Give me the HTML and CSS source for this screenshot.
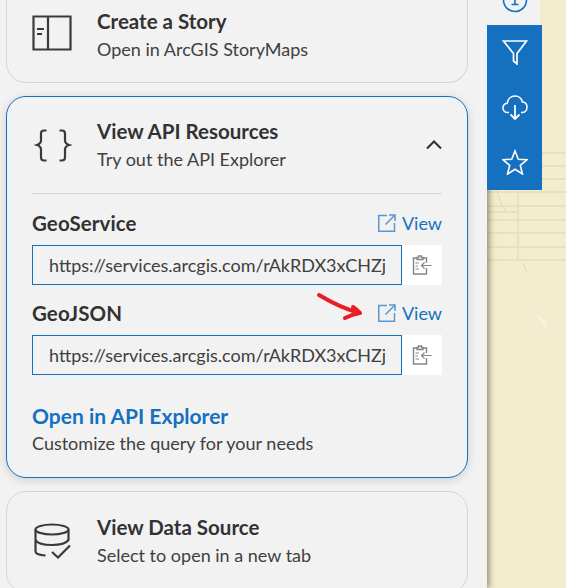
FILE: index.html
```html
<!doctype html>
<html>
  <head>
    <meta charset="utf-8">
    <title>View API Resources</title>
    <link rel="stylesheet" href="styles.css">
  </head>
  <body>
    <div class="page">
      <svg class="mapLines" viewBox="0 0 79 588">
        <path d="M0 153h79M0 166h79M0 179h79M0 192h79M0 206h79M0 212h30M0 220h79M0 233h79M0 247h79M0 260h79M31 192v68M10 190c2 8 4 16 10 22M36 263c1 3 2 6 4 8" fill="none" stroke="#e3deb9" stroke-width="1.500"/>
        <path d="M51 316l3 3 3 2 0 4 2 2" fill="none" stroke="#f8f4de" stroke-width="3"/>
      </svg>

      <div class="panel">
        <div class="card cardTop">
          <svg class="cardIcon storyIcon" viewBox="0 0 40 36"><path d="M1.500 1.500h37v33h-37zM16 1.500v33" fill="none" stroke="#3a3a3a" stroke-width="2.200"/><path d="M5 14h7M5 19h5" fill="none" stroke="#3a3a3a" stroke-width="2"/></svg>
          <div class="cardText">
            <div class="cardTitle">Create a Story</div>
            <div class="cardSub">Open in ArcGIS StoryMaps</div>
          </div>
        </div>

        <div class="card cardOpen">
          <div class="cardHead">
            <svg class="cardIcon" viewBox="0 0 40 36"><path d="M14.500 3.500H12c-2 0-3 1-3 3v7c0 2-1 3.500-4 4.500 3 1 4 2.500 4 4.500v8c0 2 1 3 3 3h2.500M27.500 3.500H30c2 0 3 1 3 3v7c0 2 1 3.500 4 4.500-3 1-4 2.500-4 4.500v8c0 2-1 3-3 3h-2.500" fill="none" stroke="#3a3a3a" stroke-width="2.200"/></svg>
            <div class="cardText">
              <div class="cardTitle">View API Resources</div>
              <div class="cardSub">Try out the API Explorer</div>
            </div>
            <svg class="chevron" viewBox="0 0 16 10"><path d="M1 8.500l7-7 7 7" fill="none" stroke="#2f2f2f" stroke-width="2"/></svg>
          </div>

          <div class="cardBody">
            <div class="linkRow">
              <span class="linkName">GeoService</span>
              <a class="viewLink"><svg class="viewIcon" viewBox="0 0 18 18"><path d="M9 1.500H.75v15.750h15.750V9" fill="none" stroke="#5b97d3" stroke-width="1.500"/><path d="M7.500 10.500L16.500 1.500M11 1h6v6" fill="none" stroke="#5b97d3" stroke-width="1.500"/></svg>View</a>
            </div>
            <div class="urlRow">
              <div class="urlBox"><span class="urlText">https://services.arcgis.com/rAkRDX3xCHZj</span></div>
              <div class="copyBtn">
                <svg viewBox="0 0 20 20"><path d="M5 3H1.500v16h13v-6M14.500 8V3H11M5 4.500V2.500h1.500V1h3v1.500H11V4.500z" fill="none" stroke="#858585" stroke-width="1.400"/><path d="M3.500 8h3.500M3.500 11h2.500M3.500 14h3.500M19.500 10.500H9M12.500 7.500l-3 3 3 3" fill="none" stroke="#858585" stroke-width="1.200"/></svg>
              </div>
            </div>

            <div class="linkRow">
              <span class="linkName">GeoJSON</span>
              <a class="viewLink"><svg class="viewIcon" viewBox="0 0 18 18"><path d="M9 1.500H.75v15.750h15.750V9" fill="none" stroke="#5b97d3" stroke-width="1.500"/><path d="M7.500 10.500L16.500 1.500M11 1h6v6" fill="none" stroke="#5b97d3" stroke-width="1.500"/></svg>View</a>
              <svg class="redArrow" viewBox="0 0 48 30"><path d="M3 3c10 6 24 14 41 18M44 21c-6 1-11 3-15 5M44 21c-2-2-4-4-7-6" fill="none" stroke="#e81e25" stroke-width="4" stroke-linecap="round"/></svg>
            </div>
            <div class="urlRow">
              <div class="urlBox"><span class="urlText">https://services.arcgis.com/rAkRDX3xCHZj</span></div>
              <div class="copyBtn">
                <svg viewBox="0 0 20 20"><path d="M5 3H1.500v16h13v-6M14.500 8V3H11M5 4.500V2.500h1.500V1h3v1.500H11V4.500z" fill="none" stroke="#858585" stroke-width="1.400"/><path d="M3.500 8h3.500M3.500 11h2.500M3.500 14h3.500M19.500 10.500H9M12.500 7.500l-3 3 3 3" fill="none" stroke="#858585" stroke-width="1.200"/></svg>
              </div>
            </div>

            <div class="explorer">
              <a class="explorerLink">Open in API Explorer</a>
              <div class="cardSub">Customize the query for your needs</div>
            </div>
          </div>
        </div>

        <div class="card cardLast">
          <svg class="cardIcon" viewBox="0 0 40 36"><ellipse cx="20" cy="6.500" rx="16.500" ry="5" fill="none" stroke="#3a3a3a" stroke-width="2.200"/><path d="M3.500 6.500v22c0 2 3 3.500 10 4M36.500 6.500v11M3.500 17c2 3.500 9 5 16.500 5s14-1.500 16.500-5" fill="none" stroke="#3a3a3a" stroke-width="2.200"/><path d="M20 29l6 5.500 12-12" fill="none" stroke="#3a3a3a" stroke-width="2.200"/></svg>
          <div class="cardText">
            <div class="cardTitle">View Data Source</div>
            <div class="cardSub">Select to open in a new tab</div>
          </div>
        </div>
      </div>

      <div class="rail">
        <div class="railTab">
          <svg viewBox="0 0 26 26"><circle cx="13" cy="3" r="11.500" fill="none" stroke="#1670c0" stroke-width="1.600"/><path d="M13 -2v9M9.500 7.500h7" fill="none" stroke="#1670c0" stroke-width="1.600"/></svg>
        </div>
        <div class="railIcons">
          <svg viewBox="0 0 26 26"><path d="M1.500 2h23L15 14.500V25l-3.500-3V14.500z" fill="none" stroke="#fff" stroke-width="1.700"/></svg>
          <svg viewBox="0 0 26 26"><path d="M7 18.500H5.500C3 18.500 1 16.500 1 13.800c0-2.500 1.800-4.300 4.200-4.600C5.800 5 8.800 2 13 2c3.800 0 6.500 2.500 7.500 6 2.800.2 4.500 2.500 4.500 5.200 0 2.800-2 5.300-5 5.300h-1" fill="none" stroke="#fff" stroke-width="1.600"/><path d="M13 11v13.500M8.500 20.500l4.500 4.500 4.500-4.500" fill="none" stroke="#fff" stroke-width="1.800"/></svg>
          <svg viewBox="0 0 26 26"><path d="M13 2l3.300 8.200 8.700.6-6.700 5.600 2.200 8.600-7.500-4.700-7.500 4.700 2.200-8.600L1 10.800l8.700-.6z" fill="none" stroke="#fff" stroke-width="1.600"/></svg>
        </div>
      </div>
    </div>
  </body>
</html>
```

FILE: styles.css
```css
html, body {
  margin:0;
  height:100%;
  overflow:hidden;
}

body {
  font-family:Lato, "Noto Sans", sans-serif;
  color:#323232;
}

.page {
  display:flex;
  align-items:flex-start;
  position:relative;
  width:566px;
  height:588px;
  overflow:hidden;
  background-color:#f2edcf;
}

.panel {
  flex:none;
  width:487px;
  height:588px;
  box-sizing:border-box;
  padding:0 19px 0 6px;
  background-color:#f2f2f2;
  box-shadow:2px 0 6px rgba(60,50,20,.55);
  position:relative;
  z-index:2;
}

.card {
  display:flex;
  align-items:center;
  box-sizing:border-box;
  width:462px;
  height:102px;
  margin-bottom:13px;
  padding:0 25px;
  border:1px solid #d6d6d6;
  border-radius:20px;
  background-color:#f2f2f2;
}

.cardTop {
  height:83px;
  border-top:none;
  border-top-left-radius:0;
  border-top-right-radius:0;
  padding-bottom:12px;
}

.storyIcon {
  margin-top:-4px;
}

.cardOpen {
  display:block;
  height:382px;
  border-color:#1670c0;
  box-shadow:0 2px 10px rgba(0,0,0,.15);
}

.cardLast {
  padding-bottom:2px;
}

.cardHead {
  display:flex;
  align-items:center;
  height:96px;
  border-bottom:1px solid #d6d6d6;
}

.cardIcon {
  flex:none;
  width:40px;
  height:36px;
}

.cardText {
  flex:1;
  margin-left:25px;
}

.cardTitle {
  font-size:20.500px;
  font-weight:700;
  line-height:24px;
}

.cardSub {
  font-size:18px;
  line-height:24px;
  margin-top:4px;
  color:#404040;
}

.chevron {
  width:16px;
  height:10px;
}

.linkRow {
  display:flex;
  justify-content:space-between;
  align-items:center;
  position:relative;
  height:26px;
  margin-top:15px;
}

.cardBody > .linkRow:first-child {
  margin-top:16px;
}

.linkRow + .urlRow {
  margin-top:9px;
}

.linkName {
  font-size:20.500px;
  font-weight:700;
  letter-spacing:.1px;
}

.viewLink {
  display:flex;
  align-items:center;
  gap:6px;
  font-size:18px;
  color:#1670c0;
}

.viewIcon {
  width:18px;
  height:18px;
}

.redArrow {
  position:absolute;
  right:78px;
  top:-8px;
  width:48px;
  height:30px;
}

.urlRow {
  display:flex;
  height:40px;
}

.urlBox {
  flex:1;
  display:flex;
  align-items:center;
  box-sizing:border-box;
  min-width:0;
  padding:0 16px;
  border:1px solid #1670c0;
  overflow:hidden;
}

.urlText {
  font-size:18px;
  color:#404040;
  white-space:nowrap;
  overflow:hidden;
}

.copyBtn {
  flex:none;
  display:flex;
  align-items:center;
  justify-content:center;
  width:40px;
  background-color:#fff;
}

.copyBtn svg {
  width:20px;
  height:20px;
}

.explorer {
  margin-top:28px;
}

.explorerLink {
  font-size:21px;
  font-weight:700;
  line-height:26px;
  color:#1670c0;
}

.explorer .cardSub {
  margin-top:2px;
}

.rail {
  flex:none;
  width:55px;
  position:relative;
  z-index:3;
}

.railTab {
  display:flex;
  justify-content:center;
  width:53px;
  height:25px;
  background-color:#f2f2f2;
  overflow:hidden;
}

.railTab svg {
  width:26px;
  height:26px;
  margin-top:-3px;
  margin-left:2px;
}

.railIcons {
  display:flex;
  flex-direction:column;
  align-items:center;
  gap:29px;
  box-sizing:border-box;
  height:165px;
  padding-top:14px;
  background-color:#1670c0;
}

.railIcons svg {
  width:26px;
  height:26px;
}

.mapLines {
  position:absolute;
  left:487px;
  top:0;
  width:79px;
  height:588px;
}
```
